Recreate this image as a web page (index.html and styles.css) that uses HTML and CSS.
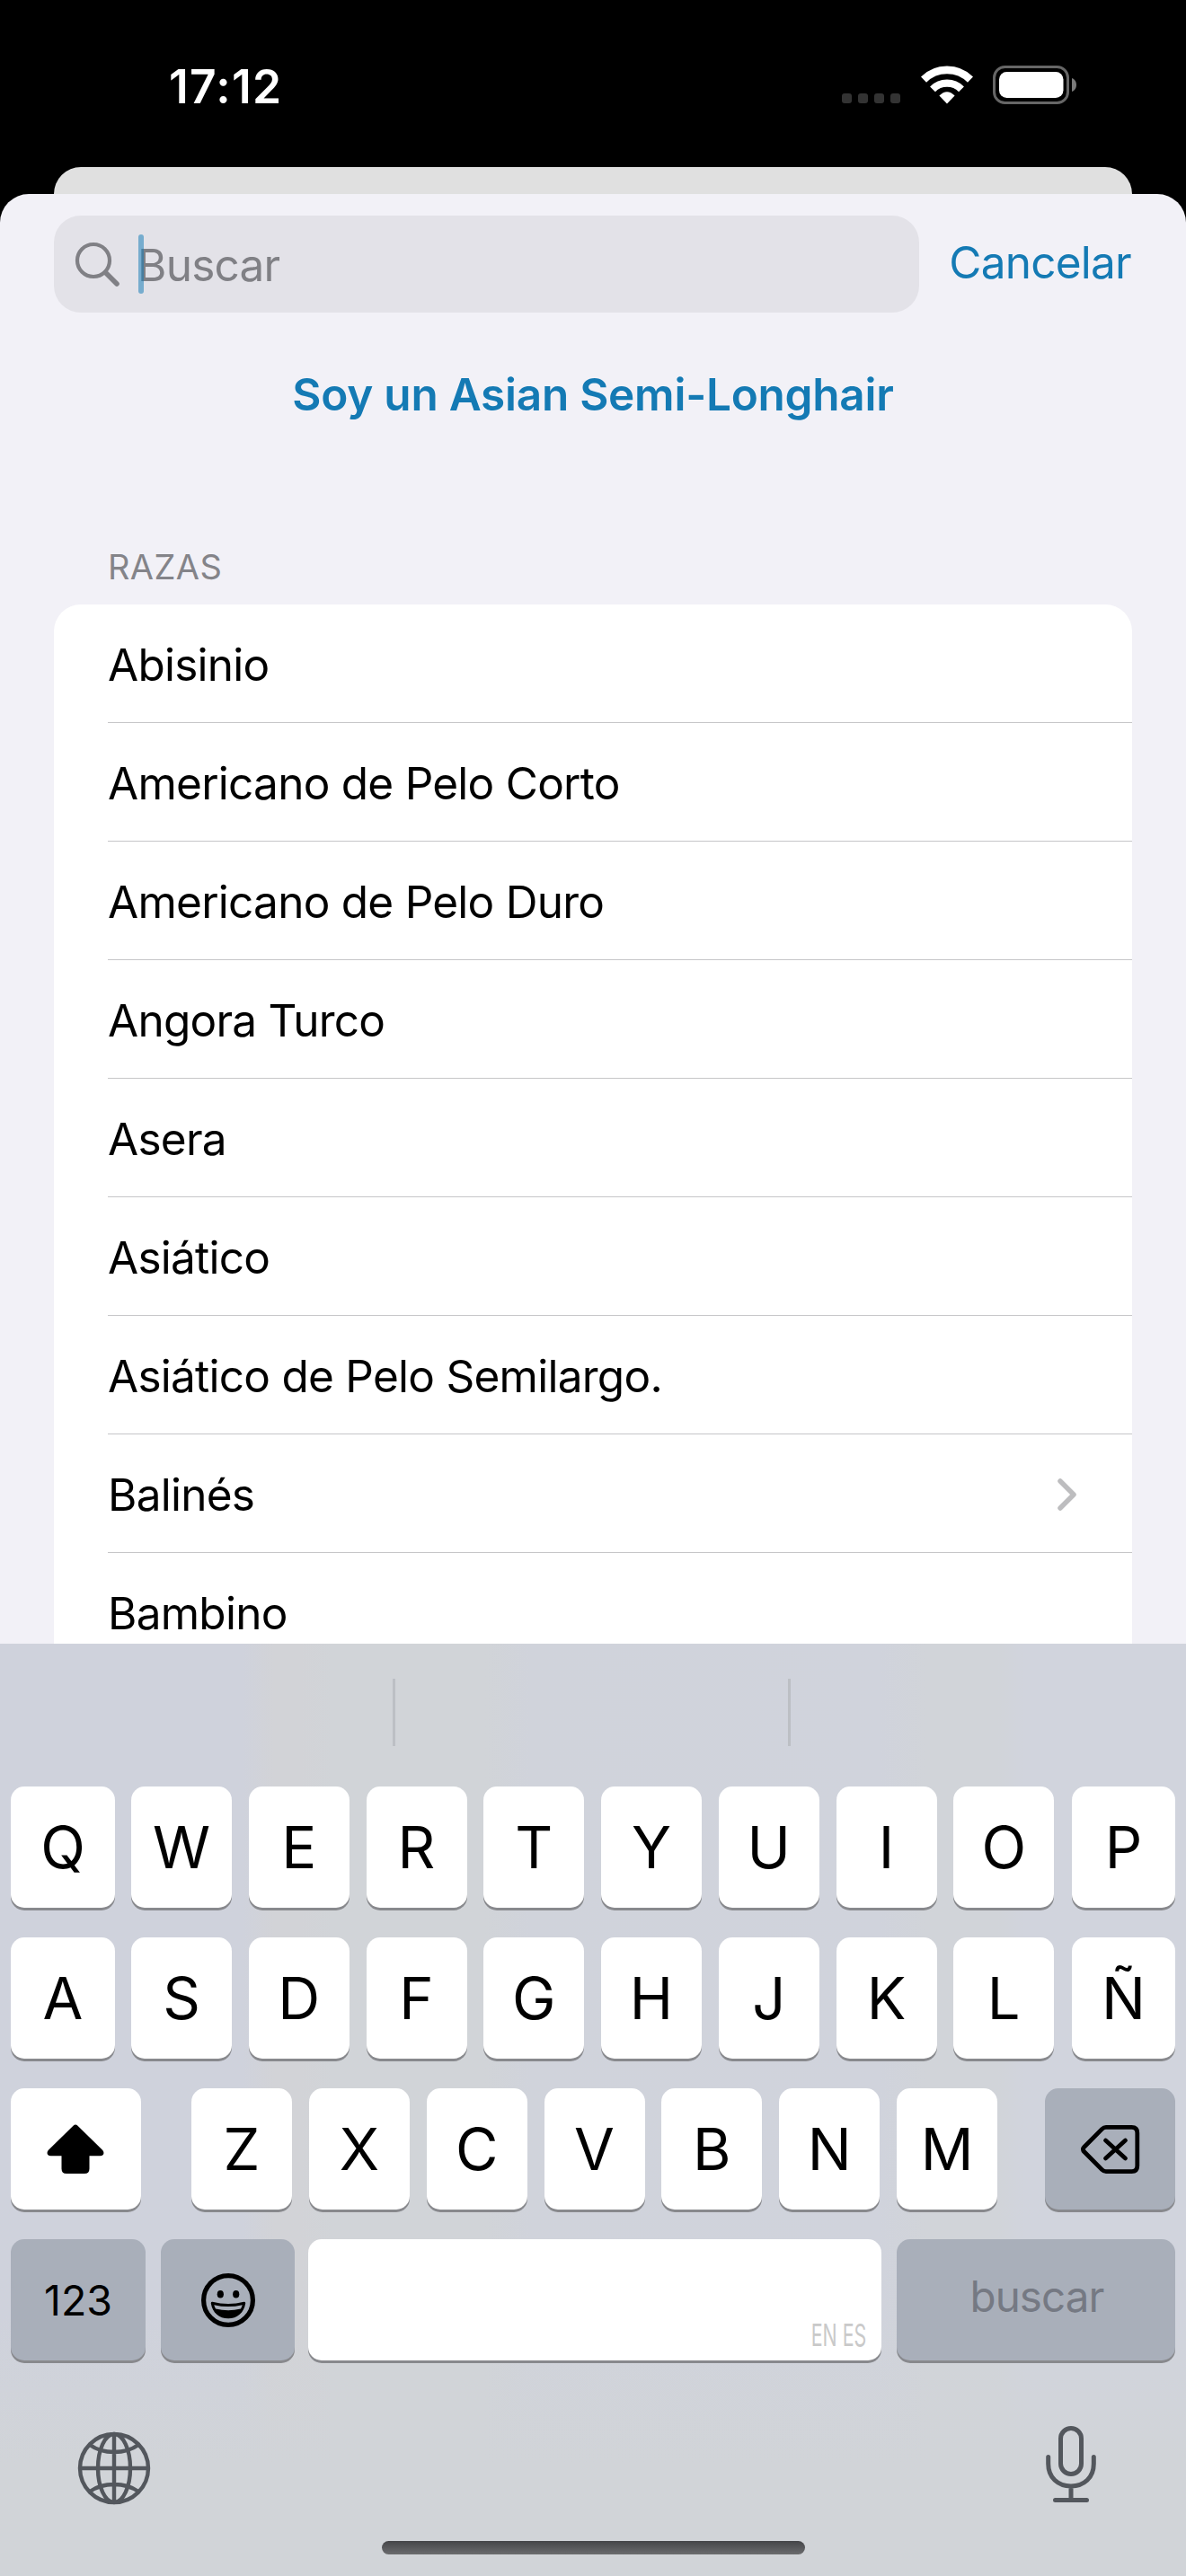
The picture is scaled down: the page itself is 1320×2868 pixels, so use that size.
FILE: index.html
```html
<!DOCTYPE html>
<html lang="es">
<head>
<meta charset="utf-8">
<title>Razas</title>
<link rel="stylesheet" href="styles.css">
</head>
<body>
<div class="screen">
  <header class="status">
    <span class="time">17:12</span>
    <div class="status-icons">
      <div class="dots"><i></i><i></i><i></i><i></i></div>
      <svg class="wifi" width="58" height="43" viewBox="0 0 58 43"><g fill="none" stroke="#fff"><path d="M3 15.6A37 37 0 0 1 55 15.6" stroke-width="8.6"/><path d="M13 26.3A22.5 22.5 0 0 1 45 26.3" stroke-width="8.2"/></g><path fill="#fff" d="M29 42.6 20.4 33.6Q29 25 37.6 33.6Z"/></svg>
      <svg class="battery" width="94" height="43" viewBox="0 0 94 43"><rect x="1.5" y="1.5" width="82" height="40" rx="12" fill="none" stroke="#666" stroke-width="3"/><rect x="7" y="7" width="71.500" height="29" rx="8.500" fill="#fff"/><path fill="#7a7a7a" d="M88 14c3 1 5 4 5 7.500s-2 6.500-5 7.500z"/></svg>
    </div>
  </header>
  <div class="back-sheet"></div>
  <main class="sheet">
    <div class="search-row">
      <div class="search">
        <svg width="52" height="52" viewBox="0 0 52 52" fill="none" stroke="#808085"><circle cx="22" cy="22" r="18" stroke-width="4.200"/><path d="M35.500 35.500 48 48" stroke-width="5.600" stroke-linecap="round"/></svg>
        <span class="placeholder">Buscar</span>
        <span class="caret"></span>
      </div>
      <a class="cancel">Cancelar</a>
    </div>
    <a class="own">Soy un Asian Semi-Longhair</a>
    <h2 class="heading">RAZAS</h2>
    <ul class="list">
      <li>Abisinio</li>
      <li>Americano de Pelo Corto</li>
      <li>Americano de Pelo Duro</li>
      <li>Angora Turco</li>
      <li>Asera</li>
      <li>Asiático</li>
      <li>Asiático de Pelo Semilargo.</li>
      <li>Balinés <svg class="chevron" width="22" height="36" viewBox="0 0 22 36" fill="none" stroke="#bdbdbf" stroke-width="5.500" stroke-linecap="round" stroke-linejoin="round"><path d="M3 3 18 18 3 33"/></svg></li>
      <li>Bambino</li>
    </ul>
  </main>
  <section class="keyboard">
    <div class="suggestions"><span></span><span></span><span></span></div>
    <div class="keys">
      <div class="row top"><b class="key">Q</b><b class="key">W</b><b class="key">E</b><b class="key">R</b><b class="key">T</b><b class="key">Y</b><b class="key">U</b><b class="key">I</b><b class="key">O</b><b class="key">P</b></div>
      <div class="row top"><b class="key">A</b><b class="key">S</b><b class="key">D</b><b class="key">F</b><b class="key">G</b><b class="key">H</b><b class="key">J</b><b class="key">K</b><b class="key">L</b><b class="key">Ñ</b></div>
      <div class="row third">
        <b class="key wide shift"><svg width="64" height="56" viewBox="0 0 64 56"><path d="M29.500 1.800Q32 -.6 34.500 1.800L62.300 29Q64.500 32 62.500 34.200 61.500 35.200 59.500 35.200H47.500V49.500Q47.500 55 42 55H22Q16.500 55 16.500 49.500V35.200H4.500Q2.500 35.200 1.500 34.200-.5 32 1.700 29Z"/></svg></b>
        <div class="letters"><b class="key">Z</b><b class="key">X</b><b class="key">C</b><b class="key">V</b><b class="key">B</b><b class="key">N</b><b class="key">M</b></div>
        <b class="key wide grey"><svg width="66" height="54" viewBox="0 0 66 54" fill="none" stroke="#000" stroke-width="4.800" stroke-linecap="round" stroke-linejoin="round"><path d="M28 2.400H56.500Q62.800 2.400 62.800 8.700V45.300Q62.800 51.600 56.500 51.600H28Q25.500 51.600 23.500 49.600L3.800 29.800Q1.200 27 3.800 24.200L23.500 4.400Q25.500 2.400 28 2.400Z"/><path d="M27.500 17 49.500 37M49.500 17 27.500 37"/></svg></b>
      </div>
      <div class="row fourth">
        <b class="key num grey">123</b>
        <b class="key emoji grey"><svg width="60" height="60" viewBox="0 0 60 60"><circle cx="30" cy="30" r="27.400" fill="none" stroke="#000" stroke-width="5.200"/><ellipse cx="21.300" cy="23.300" rx="3.600" ry="4.300"/><ellipse cx="38.700" cy="23.300" rx="3.600" ry="4.300"/><path fill-rule="evenodd" d="M12.500 31.700Q30 36.500 47.500 31.700 49.400 31.500 49.200 33.500C47.500 44 40 50.300 30 50.300S12.500 44 10.800 33.500Q10.600 31.500 12.500 31.700ZM14.300 35.200Q14.800 37.500 16 39.500 30 43 44 39.500 45.200 37.500 45.700 35.200 30 39 14.300 35.200Z"/></svg></b>
        <b class="key space"><span class="lang">EN ES</span></b>
        <b class="key go grey">buscar</b>
      </div>
    </div>
    <div class="tools">
      <svg class="globe" width="82" height="82" viewBox="0 0 82 82" fill="none" stroke="#53575d" stroke-width="4.400"><circle cx="41" cy="41" r="38"/><ellipse cx="41" cy="41" rx="18" ry="38"/><path d="M41 3V79M3 41H79M14 15Q25 23 41 23T68 15M14 67Q25 59 41 59T68 67"/></svg>
      <svg width="56" height="86" viewBox="0 0 56 86" fill="none" stroke="#53575d" stroke-width="5" stroke-linecap="round"><rect x="16.500" y="2.500" width="23" height="51" rx="11.500"/><path d="M2.700 34.500V42C2.700 57.500 13.500 67 28 67S53.300 57.500 53.300 42V34.500M28 67V82M10.500 82.500H45.500"/></svg>
    </div>
    <div class="home"></div>
  </section>
</div>
</body>
</html>
```
FILE: styles.css
```css
* { box-sizing: border-box; }
body { margin: 0; font-family: Inter, "Liberation Sans", sans-serif; background: #000; }
ul, h2 { margin: 0; padding: 0; }
svg { display: block; flex: none; }
.screen { width: 1320px; height: 2868px; display: flex; flex-direction: column; overflow: hidden; background: #000; }

.status { height: 186px; flex: none; display: flex; justify-content: space-between; align-items: flex-start; padding: 73px 121px 0 188px; }
.time { color: #fff; font-size: 51.500px; font-weight: 600; line-height: 46px; letter-spacing: 1.3px; }
.status-icons { display: flex; align-items: flex-start; }
.dots { display: flex; gap: 7px; margin: 31px 23px 0 0; }
.dots i { width: 11px; height: 11px; border-radius: 3px; background: #333; }
.wifi { margin-right: 22px; }

.back-sheet { height: 30px; flex: none; margin: 0 60px; border-radius: 30px 30px 0 0; background: #e0e0e0; }
.sheet { height: 1614px; flex: none; display: flex; flex-direction: column; overflow: hidden; padding: 24px 60px 0; border-radius: 32px 32px 0 0; background: #f2f1f7; }
.search-row { display: flex; align-items: center; justify-content: space-between; height: 108px; flex: none; }
.search { position: relative; display: flex; align-items: center; width: 963px; height: 108px; padding: 0 22px; border-radius: 30px; background: #e3e2e8; }
.placeholder { margin-left: 19px; color: #808085; font-size: 49.500px; line-height: 60px; padding-top: 2px; letter-spacing: -.75px; }
.caret { position: absolute; left: 94px; top: 21px; width: 6px; height: 66px; border-radius: 3px; background: rgba(20, 124, 184, .53); }
.cancel { color: #147ab4; font-size: 49.500px; line-height: 60px; margin: -5px 1px 0 0; letter-spacing: -.75px; }
.own { flex: none; align-self: center; margin-top: 61px; color: #147ab4; font-size: 49.500px; font-weight: 600; line-height: 60px; letter-spacing: -.25px; }
.heading { flex: none; margin: 137px 0 0 60px; height: 67px; color: #848489; font-size: 38px; font-weight: 400; line-height: 50px; letter-spacing: .4px; }
.list { flex: none; list-style: none; border-radius: 30px 30px 0 0; background: #fff; padding-left: 60px; }
.list li { height: 132px; display: flex; align-items: center; justify-content: space-between; padding: 2px 61px 0 0; border-bottom: 1px solid #c6c6c8; font-size: 49.500px; color: #000; letter-spacing: -.74px; }

.keyboard { position: relative; flex: 1; display: flex; flex-direction: column; background: linear-gradient(180deg, transparent 72%, #d1d4d8 88%), linear-gradient(90deg, #cfd2dc 0, #cfd2dc 270px, #d2d3d7 305px, #d2d3d7 335px, #d1d4d8 370px, #d1d4d8 540px, #d0d3db 590px, #d0d3dc 980px, #d1d4d9 1030px, #d1d4d9 1110px, #d1d4dd 1140px); }
.suggestions { display: grid; grid-template-columns: 440px 440px 440px; height: 159px; padding: 39px 0 45px; }
.suggestions span { border-right: 3px solid #bcbfc4; }
.suggestions span:last-child { border: 0; }
.keys { display: flex; flex-direction: column; gap: 33px; padding: 0 12px; }
.row { display: flex; height: 135px; }
.key { display: flex; align-items: center; justify-content: center; flex: none; width: 112px; height: 135px; border-radius: 15px; background: #fff; box-shadow: 0 3px 0 #88898d; color: #000; font-size: 65px; font-weight: 400; }
.top { gap: 18.750px; }
.top .key:first-child { width: 116px; margin-right: -.750px; }
.top .key:last-child { width: 115px; margin-left: auto; }
.third { justify-content: space-between; }
.letters { display: flex; gap: 18.830px; margin-left: 3px; }
.wide { width: 145px; }
.shift { padding-right: 2px; }
.grey { background: #a9afba; }
.num { width: 150px; font-size: 46.500px; }
.emoji { width: 149px; margin: 0 15px 0 17px; }
.space { width: 638px; align-items: flex-end; justify-content: flex-end; padding: 0 17px 8px 0; }
.go { width: 310px; margin-left: auto; font-size: 47.500px; letter-spacing: -.9px; color: #757983; padding: 0 0 8px 2px; }
.lang { font-size: 34.500px; line-height: 40px; color: #c9c9c9; transform: scaleX(.62); transform-origin: right; }
.tools { display: flex; justify-content: space-between; align-items: flex-start; padding: 73px 100px 0 86px; }
.globe { margin-top: 6px; }
.home { position: absolute; left: 425px; top: 999px; width: 471px; height: 15px; border-radius: 8px; background: linear-gradient(#444548, #6b6c6e); }
```
